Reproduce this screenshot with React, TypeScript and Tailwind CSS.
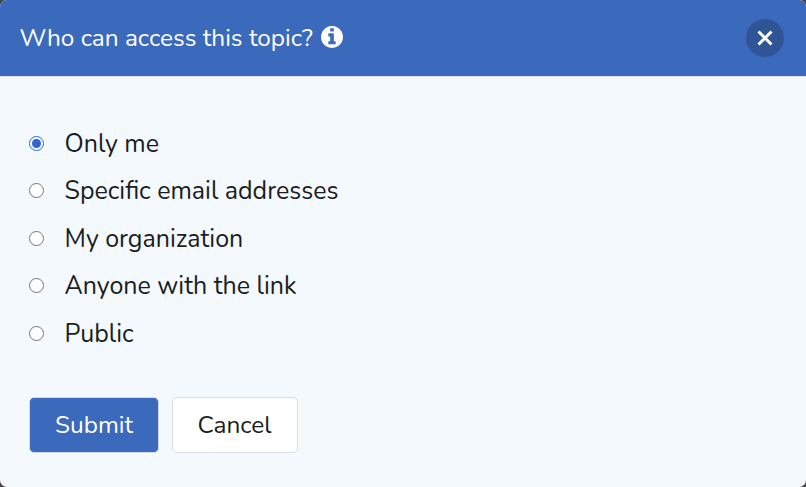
import React, { useState } from "react";

interface AccessOption {
  value: string;
  label: string;
}

const options: AccessOption[] = [
  { value: "me", label: "Only me" },
  { value: "emails", label: "Specific email addresses" },
  { value: "organization", label: "My organization" },
  { value: "link", label: "Anyone with the link" },
  { value: "public", label: "Public" },
];

function InfoIcon({ className }: { className?: string }) {
  return (
    <svg viewBox="128 128 1536 1536" fill="currentColor" className={className}>
      <path d="M1152 1376v-160q0-14-9-23t-23-9h-96v-512q0-14-9-23t-23-9h-320q-14 0-23 9t-9 23v160q0 14 9 23t23 9h96v320h-96q-14 0-23 9t-9 23v160q0 14 9 23t23 9h448q14 0 23-9t9-23zm-128-896v-160q0-14-9-23t-23-9h-192q-14 0-23 9t-9 23v160q0 14 9 23t23 9h192q14 0 23-9t9-23zm640 416q0 209-103 385.5t-279.5 279.5-385.5 103-385.5-103-279.5-279.5-103-385.5 103-385.5 279.5-279.5 385.5-103 385.5 103 279.5 279.5 103 385.5z" />
    </svg>
  );
}

function CloseIcon({ className }: { className?: string }) {
  return (
    <svg
      viewBox="0 0 16 16"
      fill="none"
      stroke="currentColor"
      strokeWidth="3"
      className={className}>
      <path d="M1.5 1.5l13 13M14.5 1.5l-13 13" />
    </svg>
  );
}

export default function App() {
  const [access, setAccess] = useState("me");

  return (
    <div className="h-screen overflow-hidden bg-[#444444] font-['Nunito','Lato',sans-serif] text-[25px] text-[#1b1d21]">
      <div className="flex h-full flex-col overflow-hidden rounded-[7px] bg-[#f4f9fd]">
        <header className="flex h-[77px] shrink-0 items-center justify-between border-b border-[#dcdfe3] bg-[#3b69bc] pr-[22px] pl-[19.5px] text-white">
          <div className="flex items-center gap-2 pb-0.5">
            <h1 className="pt-px text-[24.4px] leading-[34px] whitespace-nowrap">
              Who can access this topic?
            </h1>
            <InfoIcon className="mb-px size-[22px]" />
          </div>
          <button
            aria-label="Close"
            className="flex size-[38px] items-center justify-center rounded-full bg-[#305596]">
            <CloseIcon className="size-4" />
          </button>
        </header>

        <form
          className="flex flex-col px-[29px] pt-[42.5px]"
          onSubmit={(event) => event.preventDefault()}>
          {options.map((option) => (
            <label
              key={option.value}
              className="flex h-[47.5px] items-center gap-[20.5px]">
              <input
                type="radio"
                name="access"
                value={option.value}
                checked={access === option.value}
                onChange={() => setAccess(option.value)}
                className="peer sr-only"
              />
              <span className="flex size-[15px] shrink-0 items-center justify-center rounded-full border border-[#767676] bg-white peer-checked:border-[1.5px] peer-checked:border-[#2a67d8]">
                {access === option.value && (
                  <span className="size-[9px] shrink-0 rounded-full bg-[#2a67d8]" />
                )}
              </span>
              <span className="pt-px leading-[34px] whitespace-nowrap">
                {option.label}
              </span>
            </label>
          ))}

          <div className="mt-[39.5px] flex gap-[13px]">
            <button
              type="submit"
              className="h-14 w-[130px] rounded-[5px] border border-[#d5d9df] bg-[#3b69bc] pt-0.5 text-[24.4px] text-white">
              Submit
            </button>
            <button
              type="button"
              className="h-14 w-[126px] rounded-[5px] border border-[#dadde1] bg-white pt-0.5 pr-px text-[24.4px]">
              Cancel
            </button>
          </div>
        </form>
      </div>
    </div>
  );
}
